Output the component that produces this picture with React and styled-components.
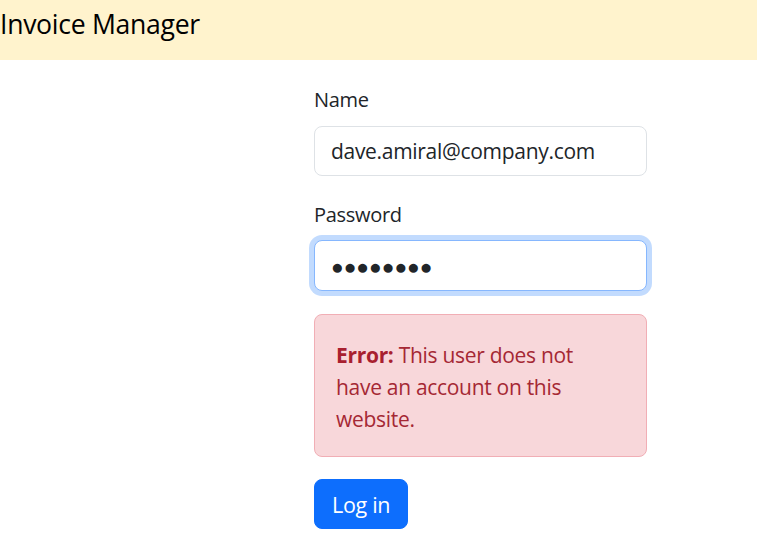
import React from "react";
import styled, { createGlobalStyle } from "styled-components";

const Global = createGlobalStyle`
  html, body { margin: 0; padding: 0; background: #fff; }
  body {
    font-family: "Open Sans", "Noto Sans", sans-serif;
    color: #212529;
    font-size: 21px;
    line-height: 1.5;
  }
  * { box-sizing: border-box; }
`;

const Header = styled.header`
  height: 60px;
  background: #fff3cd;
  display: flex;
  align-items: center;
  padding: 0 0 11px 0;
`;

const Brand = styled.div`
  font-size: 26.6px;
  color: #000;
  letter-spacing: -0.3px;
`;

const Main = styled.main`
  padding: 24px 0 0 314px;
`;

const Form = styled.form`
  width: 333px;
  display: flex;
  flex-direction: column;
`;

const Field = styled.div`
  margin-bottom: 23px;
  display: flex;
  flex-direction: column;
`;

const Label = styled.label`
  font-size: 20px;
  line-height: 31.5px;
  margin-bottom: 10px;
  color: #212529;
  letter-spacing: -0.3px;
`;

const Input = styled.input`
  height: ${(p) => (p.$focus ? "51px" : "50px")};
  width: 100%;
  padding: 0 16px;
  font-family: inherit;
  font-size: 21px;
  letter-spacing: ${(p) => (p.$dots ? "0px" : "-0.3px")};
  color: #212529;
  background: #fff;
  border: 1px solid ${(p) => (p.$focus ? "#86b7fe" : "#dee2e6")};
  border-radius: 8px;
  outline: none;
  box-shadow: ${(p) => (p.$focus ? "0 0 0 5px rgba(13,110,253,0.25)" : "none")};
`;

const Alert = styled.div`
  background: #f8d7da;
  border: 1px solid #f1aeb5;
  border-radius: 8px;
  color: #a52834;
  padding: 24px 44px 21px 21px;
  margin-bottom: 22px;
  font-size: 21px;
  line-height: 32px;
  letter-spacing: -0.3px;
  strong { font-weight: 700; color: #a8202f; }
`;

const Button = styled.button`
  align-self: flex-start;
  height: 50px;
  padding: 0 17px;
  background: #0d6efd;
  color: #fff;
  border: 1px solid #0d6efd;
  border-radius: 8px;
  font-family: inherit;
  font-size: 21.5px;
  letter-spacing: -0.3px;
`;

export default function App() {
  return (
    <>
      <Global />
      <Header>
        <Brand>Invoice Manager</Brand>
      </Header>
      <Main>
        <Form onSubmit={(e) => e.preventDefault()}>
          <Field>
            <Label>Name</Label>
            <Input type="text" defaultValue="dave.amiral@company.com" />
          </Field>
          <Field>
            <Label>Password</Label>
            <Input type="text" $focus $dots defaultValue="●●●●●●●●" readOnly />
          </Field>
          <Alert>
            <strong>Error:</strong> This user does not have an account on this website.
          </Alert>
          <Button type="submit">Log in</Button>
        </Form>
      </Main>
    </>
  );
}
